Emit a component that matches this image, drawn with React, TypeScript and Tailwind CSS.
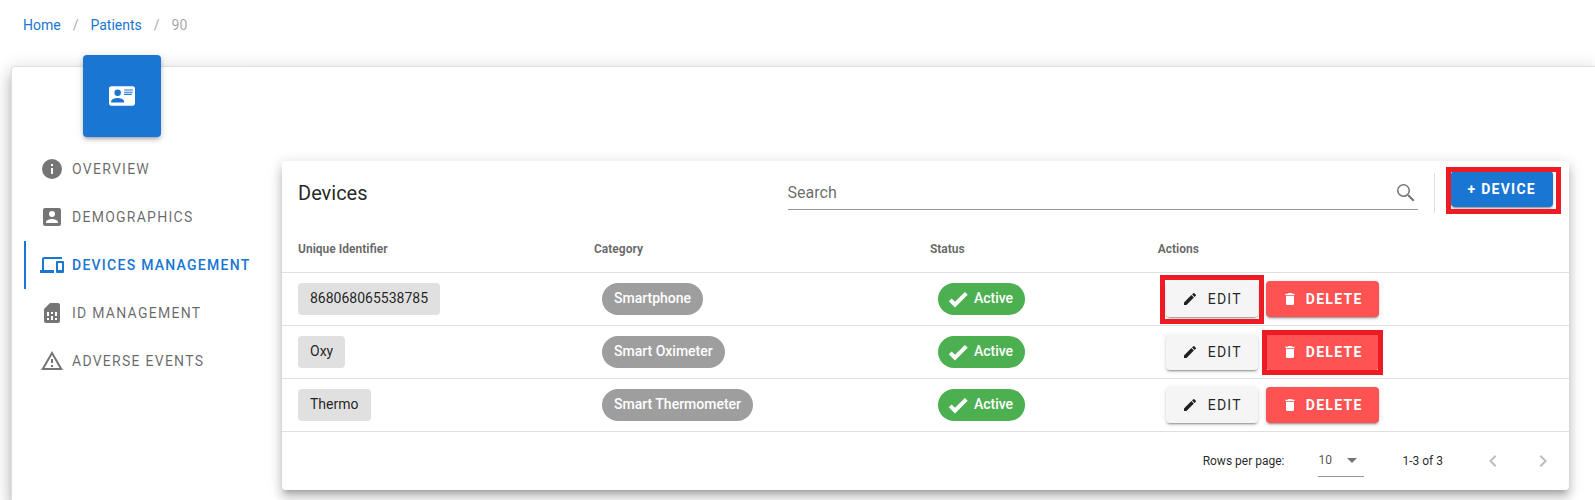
import { useState } from "react";

const icons = {
  card: "M2,3H22C23.05,3 24,3.95 24,5V19C24,20.05 23.05,21 22,21H2C0.95,21 0,20.05 0,19V5C0,3.95 0.95,3 2,3M14,6V7H22V6H14M14,8V9H21.5L22,9V8H14M14,10V11H21V10H14M8,13.91C6,13.91 2,15 2,17V18H14V17C14,15 10,13.91 8,13.91M8,6A3,3 0 0,0 5,9A3,3 0 0,0 8,12A3,3 0 0,0 11,9A3,3 0 0,0 8,6Z",
  info: "M13,9H11V7H13M13,17H11V11H13M12,2A10,10 0 0,0 2,12A10,10 0 0,0 12,22A10,10 0 0,0 22,12A10,10 0 0,0 12,2Z",
  account:
    "M6,17C6,15 10,13.9 12,13.9C14,13.9 18,15 18,17V18H6M15,9A3,3 0 0,1 12,12A3,3 0 0,1 9,9A3,3 0 0,1 12,6A3,3 0 0,1 15,9M3,5V19A2,2 0 0,0 5,21H19A2,2 0 0,0 21,19V5A2,2 0 0,0 19,3H5C3.89,3 3,3.9 3,5Z",
  devices:
    "M4,6H22V4H4A2,2 0 0,0 2,6V17H0V20H14V17H4V6M23,8H17A1,1 0 0,0 16,9V19A1,1 0 0,0 17,20H23A1,1 0 0,0 24,19V9A1,1 0 0,0 23,8M22,17H18V10H22V17Z",
  sim: "M19.99 4c0-1.1-.89-2-1.99-2h-8L4 8v12c0 1.1.9 2 2 2h12.01c1.1 0 1.99-.9 1.99-2l-.01-16zM9 19H7v-2h2v2zm8 0h-2v-2h2v2zm-8-4H7v-4h2v4zm4 4h-2v-4h2v4zm0-6h-2v-2h2v2zm4 2h-2v-4h2v4z",
  alert:
    "M12,2L1,21H23M12,6L19.53,19H4.47M11,10V14H13V10M11,16V18H13V16",
  check:
    "M9,20.42L2.79,14.21L5.62,11.38L9,14.77L18.88,4.88L21.71,7.71L9,20.42Z",
  pencil:
    "M20.71,7.04C21.1,6.65 21.1,6 20.71,5.63L18.37,3.29C18,2.9 17.35,2.9 16.96,3.29L15.12,5.12L18.87,8.87M3,17.25V21H6.75L17.81,9.93L14.06,6.18L3,17.25Z",
  trash:
    "M19,4H15.5L14.5,3H9.5L8.5,4H5V6H19M6,19A2,2 0 0,0 8,21H16A2,2 0 0,0 18,19V7H6V19Z",
  search:
    "M9.5,3A6.5,6.5 0 0,1 16,9.5C16,11.11 15.41,12.59 14.44,13.73L14.71,14H15.5L20.5,19L19,20.5L14,15.5V14.71L13.73,14.44C12.59,15.41 11.11,16 9.5,16A6.5,6.5 0 0,1 3,9.5A6.5,6.5 0 0,1 9.5,3M9.5,4.5A5,5 0 0,0 4.5,9.5A5,5 0 0,0 9.5,14.5A5,5 0 0,0 14.5,9.5A5,5 0 0,0 9.5,4.5Z",
  caret: "M7,10L12,15L17,10H7Z",
  left: "M15.41,16.58L10.83,12L15.41,7.41L14,6L8,12L14,18L15.41,16.58Z",
  right: "M8.59,16.58L13.17,12L8.59,7.41L10,6L16,12L10,18L8.59,16.58Z",
};

type IconName = keyof typeof icons;

function Icon({ name, className = "size-6" }: { name: IconName; className?: string }) {
  return (
    <svg viewBox="0 0 24 24" fill="currentColor" fillRule="evenodd" aria-hidden="true" className={`shrink-0 ${className}`}>
      <path d={icons[name]} />
    </svg>
  );
}

const cardShadow =
  "shadow-[0_5px_5px_-3px_rgba(0,0,0,0.2),0_8px_10px_1px_rgba(0,0,0,0.14),0_3px_14px_2px_rgba(0,0,0,0.12)]";
const pageShadow =
  "shadow-[0_6px_6px_-3px_rgba(0,0,0,0.2),0_10px_14px_1px_rgba(0,0,0,0.14),0_4px_18px_3px_rgba(0,0,0,0.12)]";
const buttonBase =
  "flex h-9 items-center rounded text-sm tracking-[0.09em] shadow-[0_3px_1px_-2px_rgba(0,0,0,0.2),0_2px_2px_0_rgba(0,0,0,0.14),0_1px_5px_0_rgba(0,0,0,0.12)]";
const chipBase = "inline-flex h-8 items-center pb-0.5 align-middle";

const tabs: { label: string; icon: IconName }[] = [
  { label: "OVERVIEW", icon: "info" },
  { label: "DEMOGRAPHICS", icon: "account" },
  { label: "DEVICES MANAGEMENT", icon: "devices" },
  { label: "ID MANAGEMENT", icon: "sim" },
  { label: "ADVERSE EVENTS", icon: "alert" },
];

const devices = [
  { id: "868068065538785", category: "Smartphone", marked: "edit" },
  { id: "Oxy", category: "Smart Oximeter", marked: "delete" },
  { id: "Thermo", category: "Smart Thermometer", marked: "" },
];

function Frame({ className }: { className: string }) {
  return <span aria-hidden="true" className={`pointer-events-none absolute border-[5px] border-[#ed1c24] ${className}`} />;
}

function Breadcrumbs() {
  return (
    <nav aria-label="Breadcrumb" className="flex px-[23px] pt-4 text-sm leading-[18px]">
      <a href="#home" className="text-[#1976d2]">Home</a>
      <span className="px-3 text-black/38">/</span>
      <a href="#patients" className="text-[#1976d2]">Patients</a>
      <span className="px-3 text-black/38">/</span>
      <span className="text-black/38">90</span>
    </nav>
  );
}

function Sidebar() {
  const [active, setActive] = useState("DEVICES MANAGEMENT");
  return (
    <aside className="w-[270px] shrink-0 pl-3">
      <div className="-mt-3 ml-[59px] flex h-[82px] w-[78px] items-center justify-center rounded bg-[#1976d2] text-white shadow-[0_3px_3px_-2px_rgba(0,0,0,0.2),0_3px_4px_0_rgba(0,0,0,0.14),0_1px_8px_0_rgba(0,0,0,0.12)]">
        <Icon name="card" className="size-[26px]" />
      </div>
      <div role="tablist" aria-orientation="vertical" className="mt-2 flex flex-col">
        {tabs.map((t) => {
          const on = t.label === active;
          return (
            <button
              key={t.label}
              role="tab"
              aria-selected={on}
              onClick={() => setActive(t.label)}
              className={`flex h-12 items-center gap-2 border-l-2 pl-[14px] text-sm tracking-[0.09em] ${
                on ? "border-[#1976d2] font-medium text-[#1976d2]" : "border-transparent text-black/60"
              }`}
            >
              <Icon name={t.icon} className={on ? "size-6" : "size-6 text-black/54"} />
              {t.label}
            </button>
          );
        })}
      </div>
    </aside>
  );
}

function DevicesCard() {
  const [query, setQuery] = useState("");
  const rows = devices.filter((d) => `${d.id} ${d.category}`.toLowerCase().includes(query.toLowerCase()));
  return (
    <section className={`mt-[94px] mr-[26px] mb-[10px] min-w-0 flex-1 self-start rounded bg-white ${cardShadow}`}>
      <header className="flex items-start px-4 pt-3">
        <h1 className="flex-1 pt-1 text-xl leading-8 text-black/87">Devices</h1>
        <div className="mt-1 flex h-[33px] w-[51%] max-w-[630px] items-center border-b border-black/42">
          <input
            type="text"
            aria-label="Search"
            placeholder="Search"
            value={query}
            onChange={(e) => setQuery(e.target.value)}
            className="min-w-0 flex-1 bg-transparent text-base leading-8 outline-none placeholder:text-black/60"
          />
          <Icon name="search" className="size-6 text-black/54" />
        </div>
        <div className="mx-4 h-10 w-px bg-black/12" />
        <div className="relative -mt-0.5">
          <button className={`${buttonBase} bg-[#1976d2] px-[17px] font-bold text-white`}>+ DEVICE</button>
          <Frame className="-top-1 -right-2 -bottom-[7px] -left-[5px]" />
        </div>
      </header>
      <table className="mt-[11px] w-full table-fixed border-collapse text-left">
        <thead>
          <tr className="h-12 border-b border-black/12 text-xs text-black/60">
            <th className="w-[23%] px-4 pt-0.5 font-bold">Unique Identifier</th>
            <th className="w-[26.1%] px-4 pt-0.5 font-bold">Category</th>
            <th className="w-[17.7%] px-4 pt-0.5 font-bold">Status</th>
            <th className="px-4 pt-0.5 font-bold">Actions</th>
          </tr>
        </thead>
        <tbody>
          {rows.map((d) => (
            <tr key={d.id} className="h-[53px] border-b border-black/12 text-sm">
              <td className="px-4">
                <span className={`${chipBase} rounded bg-[#e0e0e0] px-3 text-black/87`}>{d.id}</span>
              </td>
              <td className="px-6">
                <span className={`${chipBase} rounded-full bg-[#9e9e9e] px-3 font-medium text-white`}>{d.category}</span>
              </td>
              <td className="px-6">
                <span className={`${chipBase} gap-1 rounded-full bg-[#4caf50] pr-3 pl-2 font-medium text-white`}>
                  <Icon name="check" className="mt-0.5 size-6" />
                  Active
                </span>
              </td>
              <td className="px-6">
                <div className="flex gap-2">
                  <div className="relative">
                    <button className={`${buttonBase} gap-[10px] bg-[#f5f5f5] px-4 text-black/87`}>
                      <Icon name="pencil" className="size-4" />
                      EDIT
                    </button>
                    {d.marked === "edit" && <Frame className="-top-[6px] -right-[6px] -bottom-[7px] -left-[6px]" />}
                  </div>
                  <div className="relative">
                    <button className={`${buttonBase} gap-2 bg-[#ff5252] px-4 font-bold text-white`}>
                      <Icon name="trash" className="size-4" />
                      DELETE
                    </button>
                    {d.marked === "delete" && <Frame className="-top-1 -right-1 -bottom-[5px] -left-1" />}
                  </div>
                </div>
              </td>
            </tr>
          ))}
        </tbody>
      </table>
      <footer className="flex h-[58px] items-center justify-end pr-2 text-xs text-black/87">
        <label htmlFor="rows-per-page">Rows per page:</label>
        <div className="relative mr-[38px] ml-[34px] flex h-8 w-[46px] items-center border-b border-black/42 text-black/70">
          <select id="rows-per-page" className="h-full w-full appearance-none bg-transparent outline-none">
            <option>10</option>
            <option>25</option>
            <option>50</option>
          </select>
          <Icon name="caret" className="pointer-events-none absolute right-0 size-6 text-black/54" />
        </div>
        <span>1-3 of 3</span>
        <div className="ml-8 flex gap-[14px] text-black/26">
          <button aria-label="Previous page" disabled className="flex size-9 items-center justify-center">
            <Icon name="left" />
          </button>
          <button aria-label="Next page" disabled className="flex size-9 items-center justify-center">
            <Icon name="right" />
          </button>
        </div>
      </footer>
    </section>
  );
}

export default function App() {
  return (
    <div className="flex min-h-screen flex-col overflow-x-clip bg-white font-[Roboto,sans-serif]">
      <Breadcrumbs />
      <main className={`mt-8 ml-[11px] flex flex-1 rounded-tl border-t border-l border-black/12 bg-white ${pageShadow}`}>
        <Sidebar />
        <DevicesCard />
      </main>
    </div>
  );
}
